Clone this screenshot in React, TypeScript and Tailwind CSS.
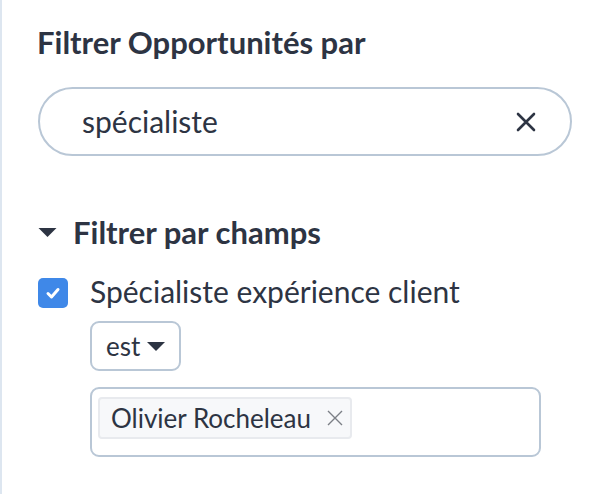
import React, { useState } from 'react';

function Caret({ className }: { className?: string }) {
  return (
    <svg viewBox="0 0 18 9" className={className} fill="currentColor">
      <path d="M0 0 L18 0 L9 9 Z" />
    </svg>
  );
}

export default function App() {
  const [query, setQuery] = useState('spécialiste');
  const [checked, setChecked] = useState(true);

  return (
    <div
      className="min-h-[494px] w-[594px] bg-white border-l-2 border-[#dde6f0] text-[#2d3443]"
      style={{ fontFamily: 'Lato, "Noto Sans", sans-serif' }}
    >
      <div className="pl-[36px] pr-[22px] pt-[24px]">
        <h2 className="text-[31px] font-bold leading-[36px] -ml-[1px]">Filtrer Opportunités par</h2>

        <div className="mt-[27px] flex h-[69px] items-center rounded-full border-2 border-[#b9c7d6] pl-[42px] pr-[34px]">
          <input
            value={query}
            onChange={(e) => setQuery(e.target.value)}
            className="min-w-0 flex-1 bg-transparent text-[30px] outline-none"
          />
          <button onClick={() => setQuery('')} className="text-[#2d3443]">
            <svg viewBox="0 0 20 20" className="h-[20px] w-[20px]" stroke="currentColor" strokeWidth="2.6" strokeLinecap="round">
              <path d="M2 2 L18 18 M18 2 L2 18" />
            </svg>
          </button>
        </div>

        <div className="mt-[58px] flex items-center gap-[16px]">
          <Caret className="h-[9px] w-[19px]" />
          <span className="text-[31px] font-bold leading-[36px]">Filtrer par champs</span>
        </div>

        <div className="mt-[23px] flex items-center gap-[22px]">
          <button
            onClick={() => setChecked(!checked)}
            className="mt-[3px] flex h-[30px] w-[30px] items-center justify-center rounded-[5px] bg-[#3f88e8]"
          >
            {checked && (
              <svg viewBox="0 0 16 16" className="h-[16px] w-[16px]" fill="none" stroke="white" strokeWidth="3" strokeLinecap="round" strokeLinejoin="round">
                <path d="M3 8.5 L6.5 12 L13 4.5" />
              </svg>
            )}
          </button>
          <span className="text-[30px] leading-[36px]">Spécialiste expérience client</span>
        </div>

        <div className="ml-[52px] mt-[12px] flex flex-col items-start gap-[16px]">
          <button className="flex h-[50px] items-center gap-[7px] rounded-[9px] border-2 border-[#b9c7d6] pl-[14px] pr-[14px] text-[26px]">
            est
            <Caret className="h-[9px] w-[18px]" />
          </button>

          <div className="flex h-[70px] w-[451px] items-start rounded-[9px] border-2 border-[#b9c7d6] px-[6px] pt-[8px]">
            <span className="flex h-[42px] items-center gap-[16px] rounded-[4px] border-2 border-[#e8eaee] bg-[#f7f8fa] pl-[11px] pr-[7px] text-[26px]">
              Olivier Rocheleau
              <svg viewBox="0 0 16 16" className="h-[16px] w-[16px]" stroke="#7b7f86" strokeWidth="1.4">
                <path d="M1 1 L15 15 M15 1 L1 15" />
              </svg>
            </span>
          </div>
        </div>
      </div>
    </div>
  );
}
